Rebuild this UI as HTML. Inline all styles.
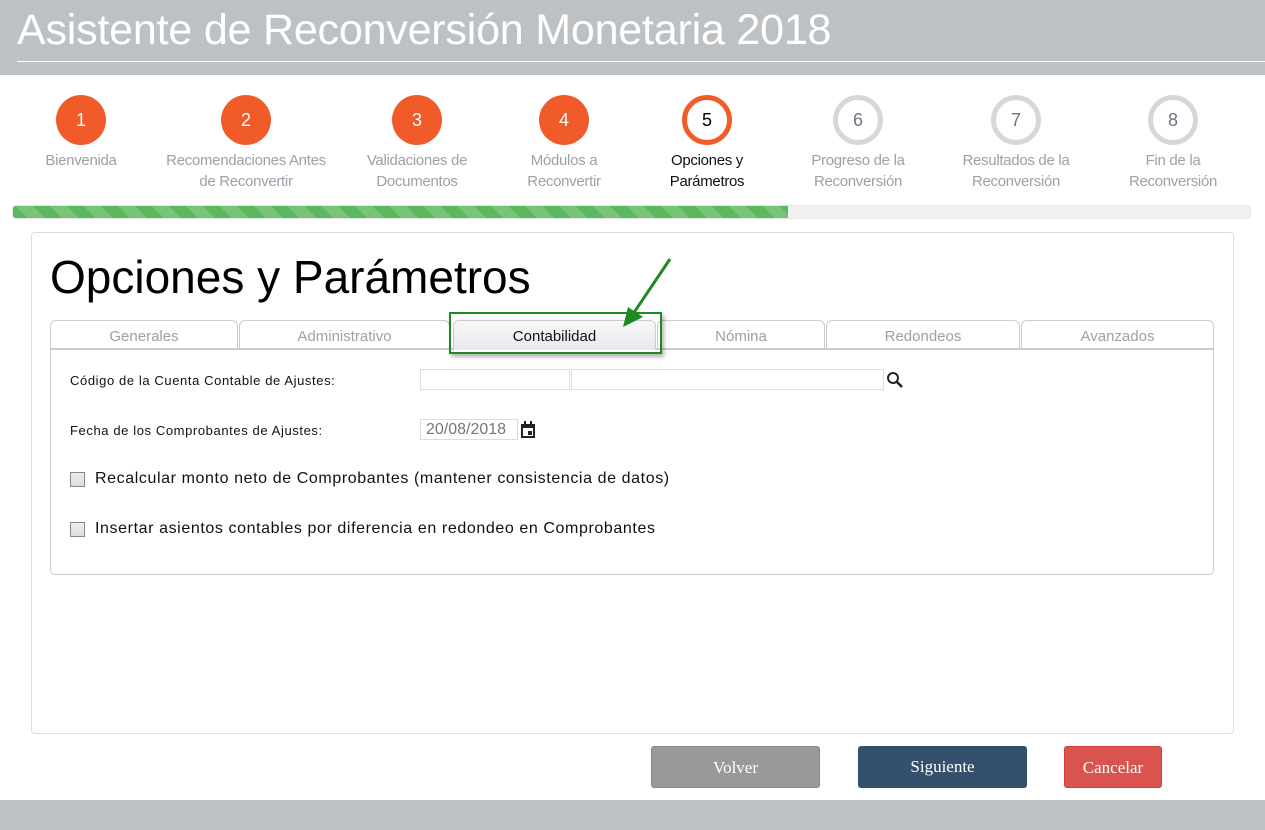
<!DOCTYPE html>
<html><head><meta charset="utf-8"><style>
*{box-sizing:border-box;margin:0;padding:0}
body{width:1265px;height:830px;background:#fff;font-family:"Liberation Sans",Arial,sans-serif;position:relative;overflow:hidden}
.hdr{position:absolute;left:0;top:0;width:1265px;height:75px;background:#bdc1c4}
.hdr h1{position:absolute;left:17px;top:6px;font-weight:normal;font-size:43px;color:#fff;letter-spacing:-0.2px}
.hdr .ln{position:absolute;left:17px;right:0;top:61px;height:1px;background:#fff}
.step{position:absolute;top:95px;width:180px;margin-left:-90px;text-align:center}
.c{width:50px;height:50px;border-radius:50%;margin:0 auto;background:#f15a29;color:#fff;font-size:18px;line-height:50px}
.c.cur{background:#fff;border:5px solid #f15a29;color:#000;line-height:40px}
.c.fut{background:#fff;border:5px solid #d5d8db;color:#6c7680;line-height:40px}
.lb{margin-top:5px;font-size:15px;line-height:21px;color:#9aa1a8;letter-spacing:-0.3px}
.lb.k{color:#111}
.bar{position:absolute;left:12px;top:205px;width:1239px;height:14px;background:#f1f1f1;border-radius:4px;border:1px solid #e5e5e5;overflow:hidden}
.bar i{position:absolute;left:0;top:0;width:775px;height:14px;background:repeating-linear-gradient(45deg,#5cb85c 0 12px,#78c478 12px 24px)}
.panel{position:absolute;left:31px;top:232px;width:1203px;height:502px;border:1px solid #ddd;border-radius:4px}
.ttl{position:absolute;left:50px;top:250px;font-size:46px;color:#000}
.tab{position:absolute;top:320px;height:29px;border:1px solid #ccc;border-bottom:none;border-radius:6px 6px 0 0;text-align:center;font-size:15px;color:#9aa1a8;line-height:32px;background:#fff}
.box{position:absolute;left:50px;top:348px;width:1164px;height:227px;border:1px solid #ccc;border-top:2px solid #ccc;border-radius:0 0 5px 5px}
.t{position:absolute;font-size:13px;color:#111;letter-spacing:0.6px}
.inp{position:absolute;height:21px;border:1px solid #ddd;background:#fff}
.cb{position:absolute;width:15px;height:15px;border:1px solid #888;background:linear-gradient(#eee,#ddd)}
.ct{position:absolute;font-size:16px;color:#111;letter-spacing:0.6px}
.btn{position:absolute;top:746px;height:42px;border-radius:3px;color:#fff;font-family:"Liberation Serif",serif;font-size:17px;text-align:center;line-height:42px}
.ftr{position:absolute;left:0;top:800px;width:1265px;height:30px;background:#bdc1c4}
</style></head><body>
<div class="hdr"><h1>Asistente de Reconversión Monetaria 2018</h1><div class="ln"></div></div>

<div class="step" style="left:81px"><div class="c">1</div><div class="lb">Bienvenida</div></div>
<div class="step" style="left:246px"><div class="c">2</div><div class="lb">Recomendaciones Antes<br>de Reconvertir</div></div>
<div class="step" style="left:417px"><div class="c">3</div><div class="lb">Validaciones de<br>Documentos</div></div>
<div class="step" style="left:564px"><div class="c">4</div><div class="lb">Módulos a<br>Reconvertir</div></div>
<div class="step" style="left:707px"><div class="c cur">5</div><div class="lb k">Opciones y<br>Parámetros</div></div>
<div class="step" style="left:858px"><div class="c fut">6</div><div class="lb">Progreso de la<br>Reconversión</div></div>
<div class="step" style="left:1016px"><div class="c fut">7</div><div class="lb">Resultados de la<br>Reconversión</div></div>
<div class="step" style="left:1173px"><div class="c fut">8</div><div class="lb">Fin de la<br>Reconversión</div></div>

<div class="bar"><i></i></div>
<div class="panel"></div>
<div class="ttl">Opciones y Parámetros</div>

<div class="tab" style="left:50px;width:188px">Generales</div>
<div class="tab" style="left:239px;width:211px">Administrativo</div>
<div class="tab" style="left:657px;width:168px">Nómina</div>
<div class="tab" style="left:826px;width:194px">Redondeos</div>
<div class="tab" style="left:1021px;width:193px">Avanzados</div>
<div class="box"></div>
<div class="tab" style="left:453px;width:203px;height:30px;background:linear-gradient(#f8f8fa,#e8e8ee);color:#111;border-color:#ccc">Contabilidad</div>
<div style="position:absolute;left:449px;top:312px;width:213px;height:42px;border:2px solid #1f8a1f;box-shadow:2px 3px 4px rgba(0,0,0,.3)"></div>
<svg style="position:absolute;left:615px;top:255px" width="60" height="75"><line x1="55" y1="4" x2="16" y2="62" stroke="#1f8a1f" stroke-width="3"/><polygon points="8,72 13,52 28,62" fill="#1f8a1f"/></svg>

<div class="t" style="left:70px;top:373px">Código de la Cuenta Contable de Ajustes:</div>
<div class="inp" style="left:420px;top:369px;width:150px"></div>
<div class="inp" style="left:571px;top:369px;width:313px"></div>
<svg style="position:absolute;left:886px;top:371px" width="18" height="18"><circle cx="7" cy="7" r="5" fill="none" stroke="#222" stroke-width="2"/><line x1="11" y1="11" x2="16" y2="16" stroke="#222" stroke-width="2.5"/></svg>
<div class="t" style="left:70px;top:423px">Fecha de los Comprobantes de Ajustes:</div>
<div class="inp" style="left:420px;top:419px;width:98px;font-size:16px;color:#777;padding-left:5px;line-height:20px">20/08/2018</div>
<svg style="position:absolute;left:520px;top:421px" width="16" height="18"><rect x="1" y="3" width="14" height="14" fill="#222"/><rect x="3" y="7" width="10" height="8" fill="#fff"/><rect x="8" y="10" width="4" height="4" fill="#222"/><rect x="4" y="0" width="2" height="4" fill="#222"/><rect x="10" y="0" width="2" height="4" fill="#222"/></svg>
<div class="cb" style="left:70px;top:472px"></div>
<div class="ct" style="left:95px;top:470px">Recalcular monto neto de Comprobantes (mantener consistencia de datos)</div>
<div class="cb" style="left:70px;top:522px"></div>
<div class="ct" style="left:95px;top:520px">Insertar asientos contables por diferencia en redondeo en Comprobantes</div>

<div class="btn" style="left:651px;width:169px;background:#999;border:1px solid #8a8a8a">Volver</div>
<div class="btn" style="left:858px;width:169px;background:#35506d">Siguiente</div>
<div class="btn" style="left:1064px;width:98px;background:#d9534f;border:1px solid #d43f3a">Cancelar</div>
<div class="ftr"></div>
</body></html>
